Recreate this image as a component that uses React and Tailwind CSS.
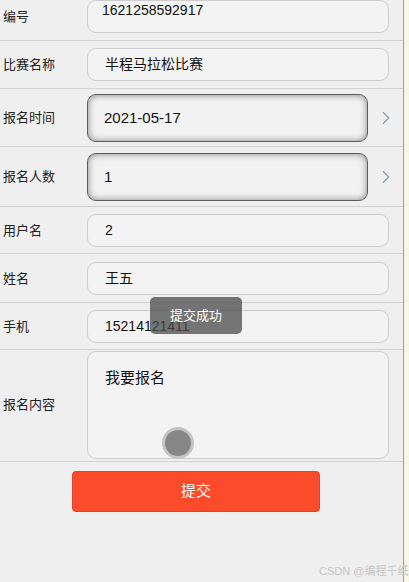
import { ChevronRight } from 'lucide-react'

const FONT = { fontFamily: '"Liberation Sans", Arial, "Noto Sans CJK SC", sans-serif' }

const rows = [
  { label: '编号', value: '1621258592917', h: 'h-[41px]', pt: 'pt-0', box: 'h-[33px]', textPos: 'items-start', size: 'text-[14px]' },
  { label: '比赛名称', value: '半程马拉松比赛', h: 'h-[48px]', pt: 'pt-[7px]', box: 'h-[33px]', size: 'text-[14px]' },
  { label: '报名时间', value: '2021-05-17', h: 'h-[58px]', pt: 'pt-[5px]', box: 'h-[48px]', picker: true, size: 'text-[15px]' },
  { label: '报名人数', value: '1', h: 'h-[60px]', pt: 'pt-[6px]', box: 'h-[48px]', picker: true, size: 'text-[15px]' },
  { label: '用户名', value: '2', h: 'h-[47px]', pt: 'pt-[7px]', box: 'h-[33px]', size: 'text-[14px]' },
  { label: '姓名', value: '王五', h: 'h-[49px]', pt: 'pt-[8px]', box: 'h-[33px]', size: 'text-[14px]' },
  { label: '手机', value: '15214121411', h: 'h-[47px]', pt: 'pt-[7px]', box: 'h-[33px]', size: 'text-[14px]' },
]

function Row({ row }) {
  return (
    <div className={`${row.h} ${row.pt} border-b border-[#d2d2d2] flex items-start`}>
      <div className={`flex items-center w-full ${row.box}`}>
        <div className="w-[87px] pl-[3px] text-[13px] text-[#222]">{row.label}</div>
        {row.picker ? (
          <>
            <div className="w-[281px] h-full rounded-[9px] border border-[#5c5c5c] bg-[#f2f2f2] shadow-[inset_0_0_7px_rgba(0,0,0,0.45)] flex items-center pl-[16px] text-[#111]">
              <span className={row.size}>{row.value}</span>
            </div>
            <ChevronRight className="ml-[7px] text-[#8a9bb0]" size={22} strokeWidth={1.2} />
          </>
        ) : (
          <div className={`w-[302px] h-full rounded-[9px] border border-[#cdcdcd] bg-[#f3f3f3] flex pl-[17px] text-[#111] ${row.textPos || 'items-center'}`}>
            <span className={`${row.size} ${row.label === '编号' ? '-ml-[3px] -mt-[1px]' : ''}`}>{row.value}</span>
          </div>
        )}
      </div>
    </div>
  )
}

export default function App() {
  return (
    <div className="w-[409px] h-[582px] relative overflow-hidden bg-[#f7f5e3]" style={FONT}>
      <div className="w-[404px] h-full bg-[#efefef] border-r border-[#9c9c9c]">
        {rows.map((r) => (
          <Row key={r.label} row={r} />
        ))}

        {/* 报名内容 */}
        <div className="h-[112px] pt-[1px] border-b border-[#d2d2d2]">
          <div className="flex items-center h-[108px]">
            <div className="w-[87px] pl-[3px] text-[13px] text-[#222]">报名内容</div>
            <div className="w-[302px] h-full rounded-[9px] border border-[#cdcdcd] bg-[#f3f3f3] pl-[17px] pt-[15px] text-[15px] text-[#111]">
              我要报名
            </div>
          </div>
        </div>

        <button className="ml-[72px] mt-[9px] w-[248px] h-[41px] rounded-[4px] bg-[#fc4b2b] text-white text-[15px] border border-[#e0442a]">
          提交
        </button>
      </div>

      {/* toast */}
      <div className="absolute left-[150px] top-[297px] w-[92px] h-[37px] rounded-[5px] bg-[#4a4a4a]/75 text-white text-[13px] flex items-center justify-center">
        提交成功
      </div>

      {/* touch indicator */}
      <div className="absolute left-[162px] top-[427px] w-[32px] h-[32px] rounded-full bg-[#c4c4c4] flex items-center justify-center">
        <div className="w-[26px] h-[26px] rounded-full bg-[#878787]" />
      </div>

      <div className="absolute left-[319px] top-[563px] text-[11px] text-[#c6c6c6] whitespace-nowrap">
        CSDN @编程千纸鹤
      </div>
    </div>
  )
}
